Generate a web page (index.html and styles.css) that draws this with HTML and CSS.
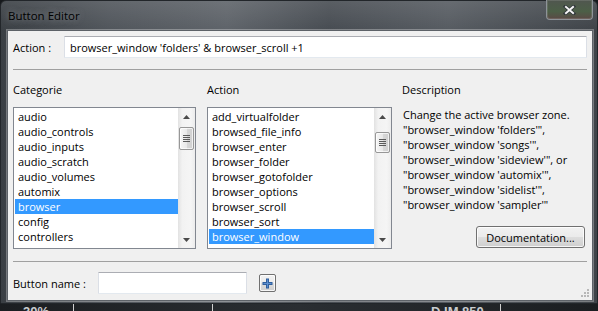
FILE: index.html
```html
<!DOCTYPE html>
<html lang="en">
<head>
    <meta charset="UTF-8">
    <title>Button Editor</title>
    <link rel="stylesheet" href="styles.css">
</head>
<body>

<div class="window">
    <div class="titlebar">
        <span class="title">Button Editor</span>
        <div class="close-btn">
            <svg width="13" height="10" viewBox="0 0 13 10">
                <path d="M2.5 1.5 L10.5 8.5 M10.5 1.5 L2.5 8.5" stroke="#30363a" stroke-width="3.6" stroke-linecap="square"/>
                <path d="M3 2 L10 8 M10 2 L3 8" stroke="#f4f4f4" stroke-width="2" stroke-linecap="square"/>
            </svg>
        </div>
    </div>

    <div class="client">
        <div class="action-row">
            <label class="row-label action-label" for="action">Action :</label>
            <input class="textbox action-input" id="action" type="text" value="browser_window 'folders' &amp; browser_scroll +1">
        </div>

        <div class="separator"></div>

        <div class="columns">
            <div class="col col-cat">
                <div class="heading">Categorie</div>
                <div class="listbox">
                    <div class="items">
                        <div class="item">audio</div>
                        <div class="item">audio_controls</div>
                        <div class="item">audio_inputs</div>
                        <div class="item">audio_scratch</div>
                        <div class="item">audio_volumes</div>
                        <div class="item">automix</div>
                        <div class="item selected">browser</div>
                        <div class="item">config</div>
                        <div class="item">controllers</div>
                        <div class="item">crossfader</div>
                    </div>
                    <div class="vscroll">
                        <div class="arrow">
                            <svg width="7" height="4" viewBox="0 0 7 4"><path d="M0 4 L3.5 0 L7 4 Z" fill="#4a4a4a"/></svg>
                        </div>
                        <div class="track">
                            <div class="thumb thumb-cat"><span class="grip-lines"></span></div>
                        </div>
                        <div class="arrow">
                            <svg width="7" height="4" viewBox="0 0 7 4"><path d="M0 0 L7 0 L3.5 4 Z" fill="#4a4a4a"/></svg>
                        </div>
                    </div>
                </div>
            </div>

            <div class="col col-act">
                <div class="heading">Action</div>
                <div class="listbox">
                    <div class="items">
                        <div class="item">add_virtualfolder</div>
                        <div class="item">browsed_file_info</div>
                        <div class="item">browser_enter</div>
                        <div class="item">browser_folder</div>
                        <div class="item">browser_gotofolder</div>
                        <div class="item">browser_options</div>
                        <div class="item">browser_scroll</div>
                        <div class="item">browser_sort</div>
                        <div class="item selected">browser_window</div>
                        <div class="item">filter_backdrop</div>
                    </div>
                    <div class="vscroll">
                        <div class="arrow">
                            <svg width="7" height="4" viewBox="0 0 7 4"><path d="M0 4 L3.5 0 L7 4 Z" fill="#4a4a4a"/></svg>
                        </div>
                        <div class="track">
                            <div class="thumb thumb-act"><span class="grip-lines"></span></div>
                        </div>
                        <div class="arrow">
                            <svg width="7" height="4" viewBox="0 0 7 4"><path d="M0 0 L7 0 L3.5 4 Z" fill="#4a4a4a"/></svg>
                        </div>
                    </div>
                </div>
            </div>

            <div class="col col-desc">
                <div class="heading">Description</div>
                <div class="desc-text">
                    Change the active browser zone.<br>
                    "browser_window 'folders'",<br>
                    "browser_window 'songs'",<br>
                    "browser_window 'sideview'", or<br>
                    "browser_window 'automix'",<br>
                    "browser_window 'sidelist'",<br>
                    "browser_window 'sampler'"
                </div>
                <button class="push-btn doc-btn">Documentation...</button>
            </div>
        </div>

        <div class="separator separator-bottom"></div>

        <div class="name-row">
            <label class="row-label name-label" for="bname">Button name :</label>
            <input class="textbox name-input" id="bname" type="text" value="">
            <button class="push-btn plus-btn">
                <svg width="11" height="11" viewBox="0 0 11 11">
                    <path d="M5.5 0.5 V10.5 M0.5 5.5 H10.5" stroke="#2f5f9e" stroke-width="3"/>
                    <path d="M5.5 1.5 V9.5 M1.5 5.5 H9.5" stroke="#5d8fcf" stroke-width="1"/>
                </svg>
            </button>
        </div>

        <svg class="size-grip" width="10" height="10" viewBox="0 0 10 10">
            <rect x="7" y="1" width="2" height="2" fill="#b8b8b8"/>
            <rect x="4" y="4" width="2" height="2" fill="#b8b8b8"/>
            <rect x="7" y="4" width="2" height="2" fill="#b8b8b8"/>
            <rect x="1" y="7" width="2" height="2" fill="#b8b8b8"/>
            <rect x="4" y="7" width="2" height="2" fill="#b8b8b8"/>
            <rect x="7" y="7" width="2" height="2" fill="#b8b8b8"/>
        </svg>
    </div>
</div>

<div class="behind">
    <span class="behind-text pct">30%</span>
    <span class="tick tick1"></span>
    <span class="tick tick2"></span>
    <span class="behind-text deck">D IM 850</span>
    <span class="tick tick3"></span>
</div>

</body>
</html>
```

FILE: styles.css
```css
body {
    margin: 0;
    width: 598px;
    height: 311px;
    overflow: hidden;
    background: #16191c;
    font-family: "Open Sans", sans-serif;
    font-size: 11px;
    color: #000;
}

/* glass frame */
.window {
    height: 304px;
    box-sizing: border-box;
    display: flex;
    flex-direction: column;
    padding: 0 4px 2px 6px;
    border: 1px solid #22262a;
    border-radius: 6px 6px 0 0;
    background:
        linear-gradient(to bottom, rgba(255,255,255,0.1), rgba(255,255,255,0) 30px),
        linear-gradient(to right, #3a3f44 0%, #50555b 18%, #5e6369 38%, #474c52 55%, #565b61 75%, #3e4348 100%);
}
.titlebar {
    height: 29px;
    display: flex;
    align-items: center;
    padding-left: 1px;
}
.title {
    font-size: 11.5px;
    color: #000;
    text-shadow: 0 0 6px rgba(200,205,210,0.55);
}
.close-btn {
    margin-left: auto;
    align-self: flex-start;
    margin-top: -1px;
    width: 47px;
    height: 20px;
    box-sizing: border-box;
    border: 1px solid #8d9398;
    border-top: none;
    border-radius: 0 0 4px 4px;
    display: flex;
    align-items: center;
    justify-content: center;
    background: linear-gradient(to bottom, #50564f, #4c5f47 60%, #5a4a45);
    box-shadow: inset 0 0 0 1px rgba(255,255,255,0.12);
}

.client {
    position: relative;
    height: 271px;
    box-sizing: border-box;
    padding: 5px 5px 0 5px;
    background: #f0f0f0;
    border: 1px solid #5d6268;
    box-shadow: 0 0 0 1px rgba(255,255,255,0.3);
}

.action-row,
.name-row {
    display: flex;
    align-items: center;
}
.name-row {
    margin-top: 10px;
}
.row-label {
    flex-shrink: 0;
}
.action-label {
    width: 51px;
}
.name-label {
    width: 85px;
}
.textbox {
    height: 22px;
    box-sizing: border-box;
    margin: 0;
    padding: 0 5px;
    font-family: "Open Sans", sans-serif;
    font-size: 11px;
    color: #000;
    background: #fff;
    border: 1px solid #dbdfe6;
    border-top-color: #abadb3;
    border-bottom-color: #e3e9ef;
    border-radius: 1px;
    outline: none;
}
.action-input {
    flex: 1;
}
.name-input {
    width: 149px;
}

.separator {
    height: 1px;
    margin-top: 11px;
    background: #a0a0a0;
}
.separator-bottom {
    margin-top: 12px;
}

.columns {
    display: flex;
    margin-top: 12px;
}
.col {
    display: flex;
    flex-direction: column;
}
.col-cat {
    width: 183px;
}
.col-act {
    width: 185px;
    margin-left: 11px;
}
.col-desc {
    flex: 1;
    margin-left: 10px;
}
.heading {
    height: 15px;
    line-height: 15px;
    margin-bottom: 10px;
}

.listbox {
    display: flex;
    height: 142px;
    flex-shrink: 0;
    box-sizing: border-box;
    border: 1px solid #828790;
    background: #fff;
}
.items {
    flex: 1;
    overflow: hidden;
    padding: 1px 0 0 1px;
}
.item {
    height: 15px;
    line-height: 15px;
    padding-left: 3px;
    white-space: nowrap;
}
.item.selected {
    background: #3399ff;
    color: #fff;
}

.vscroll {
    width: 17px;
    display: flex;
    flex-direction: column;
    background: linear-gradient(to right, #e2e2e2, #f2f2f2 25%, #f5f5f5 75%, #ececec);
}
.arrow {
    height: 17px;
    display: flex;
    align-items: center;
    justify-content: center;
}
.track {
    flex: 1;
}
.thumb {
    margin-left: 1px;
    width: 15px;
    box-sizing: border-box;
    border: 1px solid #979797;
    border-radius: 2px;
    background: linear-gradient(to right, #f6f6f6, #e9e9e9 50%, #d8d8d8 51%, #d0d0d0);
    box-shadow: inset 0 0 0 1px rgba(255,255,255,0.7);
    display: flex;
    align-items: center;
    justify-content: center;
}
.thumb-cat {
    margin-top: 2px;
    height: 23px;
}
.thumb-act {
    margin-top: 7px;
    height: 21px;
}
.grip-lines {
    width: 7px;
    height: 7px;
    background: repeating-linear-gradient(to bottom, #5a5a5a 0, #5a5a5a 1px, transparent 1px, transparent 2px);
}

.desc-text {
    line-height: 15px;
    white-space: nowrap;
    padding-left: 1px;
}

.push-btn {
    margin: 0;
    padding: 0;
    box-sizing: border-box;
    font-family: "Open Sans", sans-serif;
    font-size: 11px;
    color: #000;
    border: 1px solid #707070;
    border-radius: 3px;
    background: linear-gradient(to bottom, #f2f2f2 0%, #ebebeb 48%, #dddddd 52%, #cfcfcf 100%);
    box-shadow: inset 0 0 0 1px rgba(255,255,255,0.8);
}
.doc-btn {
    margin-top: auto;
    align-self: flex-end;
    margin-right: 2px;
    margin-bottom: 1px;
    width: 109px;
    height: 22px;
}
.plus-btn {
    margin-left: 12px;
    width: 17px;
    height: 18px;
    display: flex;
    align-items: center;
    justify-content: center;
    border-radius: 2px;
}

.size-grip {
    position: absolute;
    right: 2px;
    bottom: 2px;
}

/* strip of the window behind */
.behind {
    height: 7px;
    overflow: hidden;
    display: flex;
    align-items: flex-start;
    background: linear-gradient(to right, #1b1e21, #2a2e32 50%, #1b1e21);
}
.behind-text {
    font-family: "Liberation Sans", sans-serif;
    font-size: 13px;
    font-weight: bold;
    line-height: 13px;
    color: #c9cdd0;
    margin-top: 1px;
}
.pct {
    margin-left: 23px;
}
.deck {
    margin-left: 218px;
}
.tick {
    width: 1px;
    height: 7px;
    background: #d0d0d0;
}
.tick1 {
    margin-left: 24px;
}
.tick2 {
    margin-left: 138px;
}
.tick3 {
    margin-left: 16px;
}
```
